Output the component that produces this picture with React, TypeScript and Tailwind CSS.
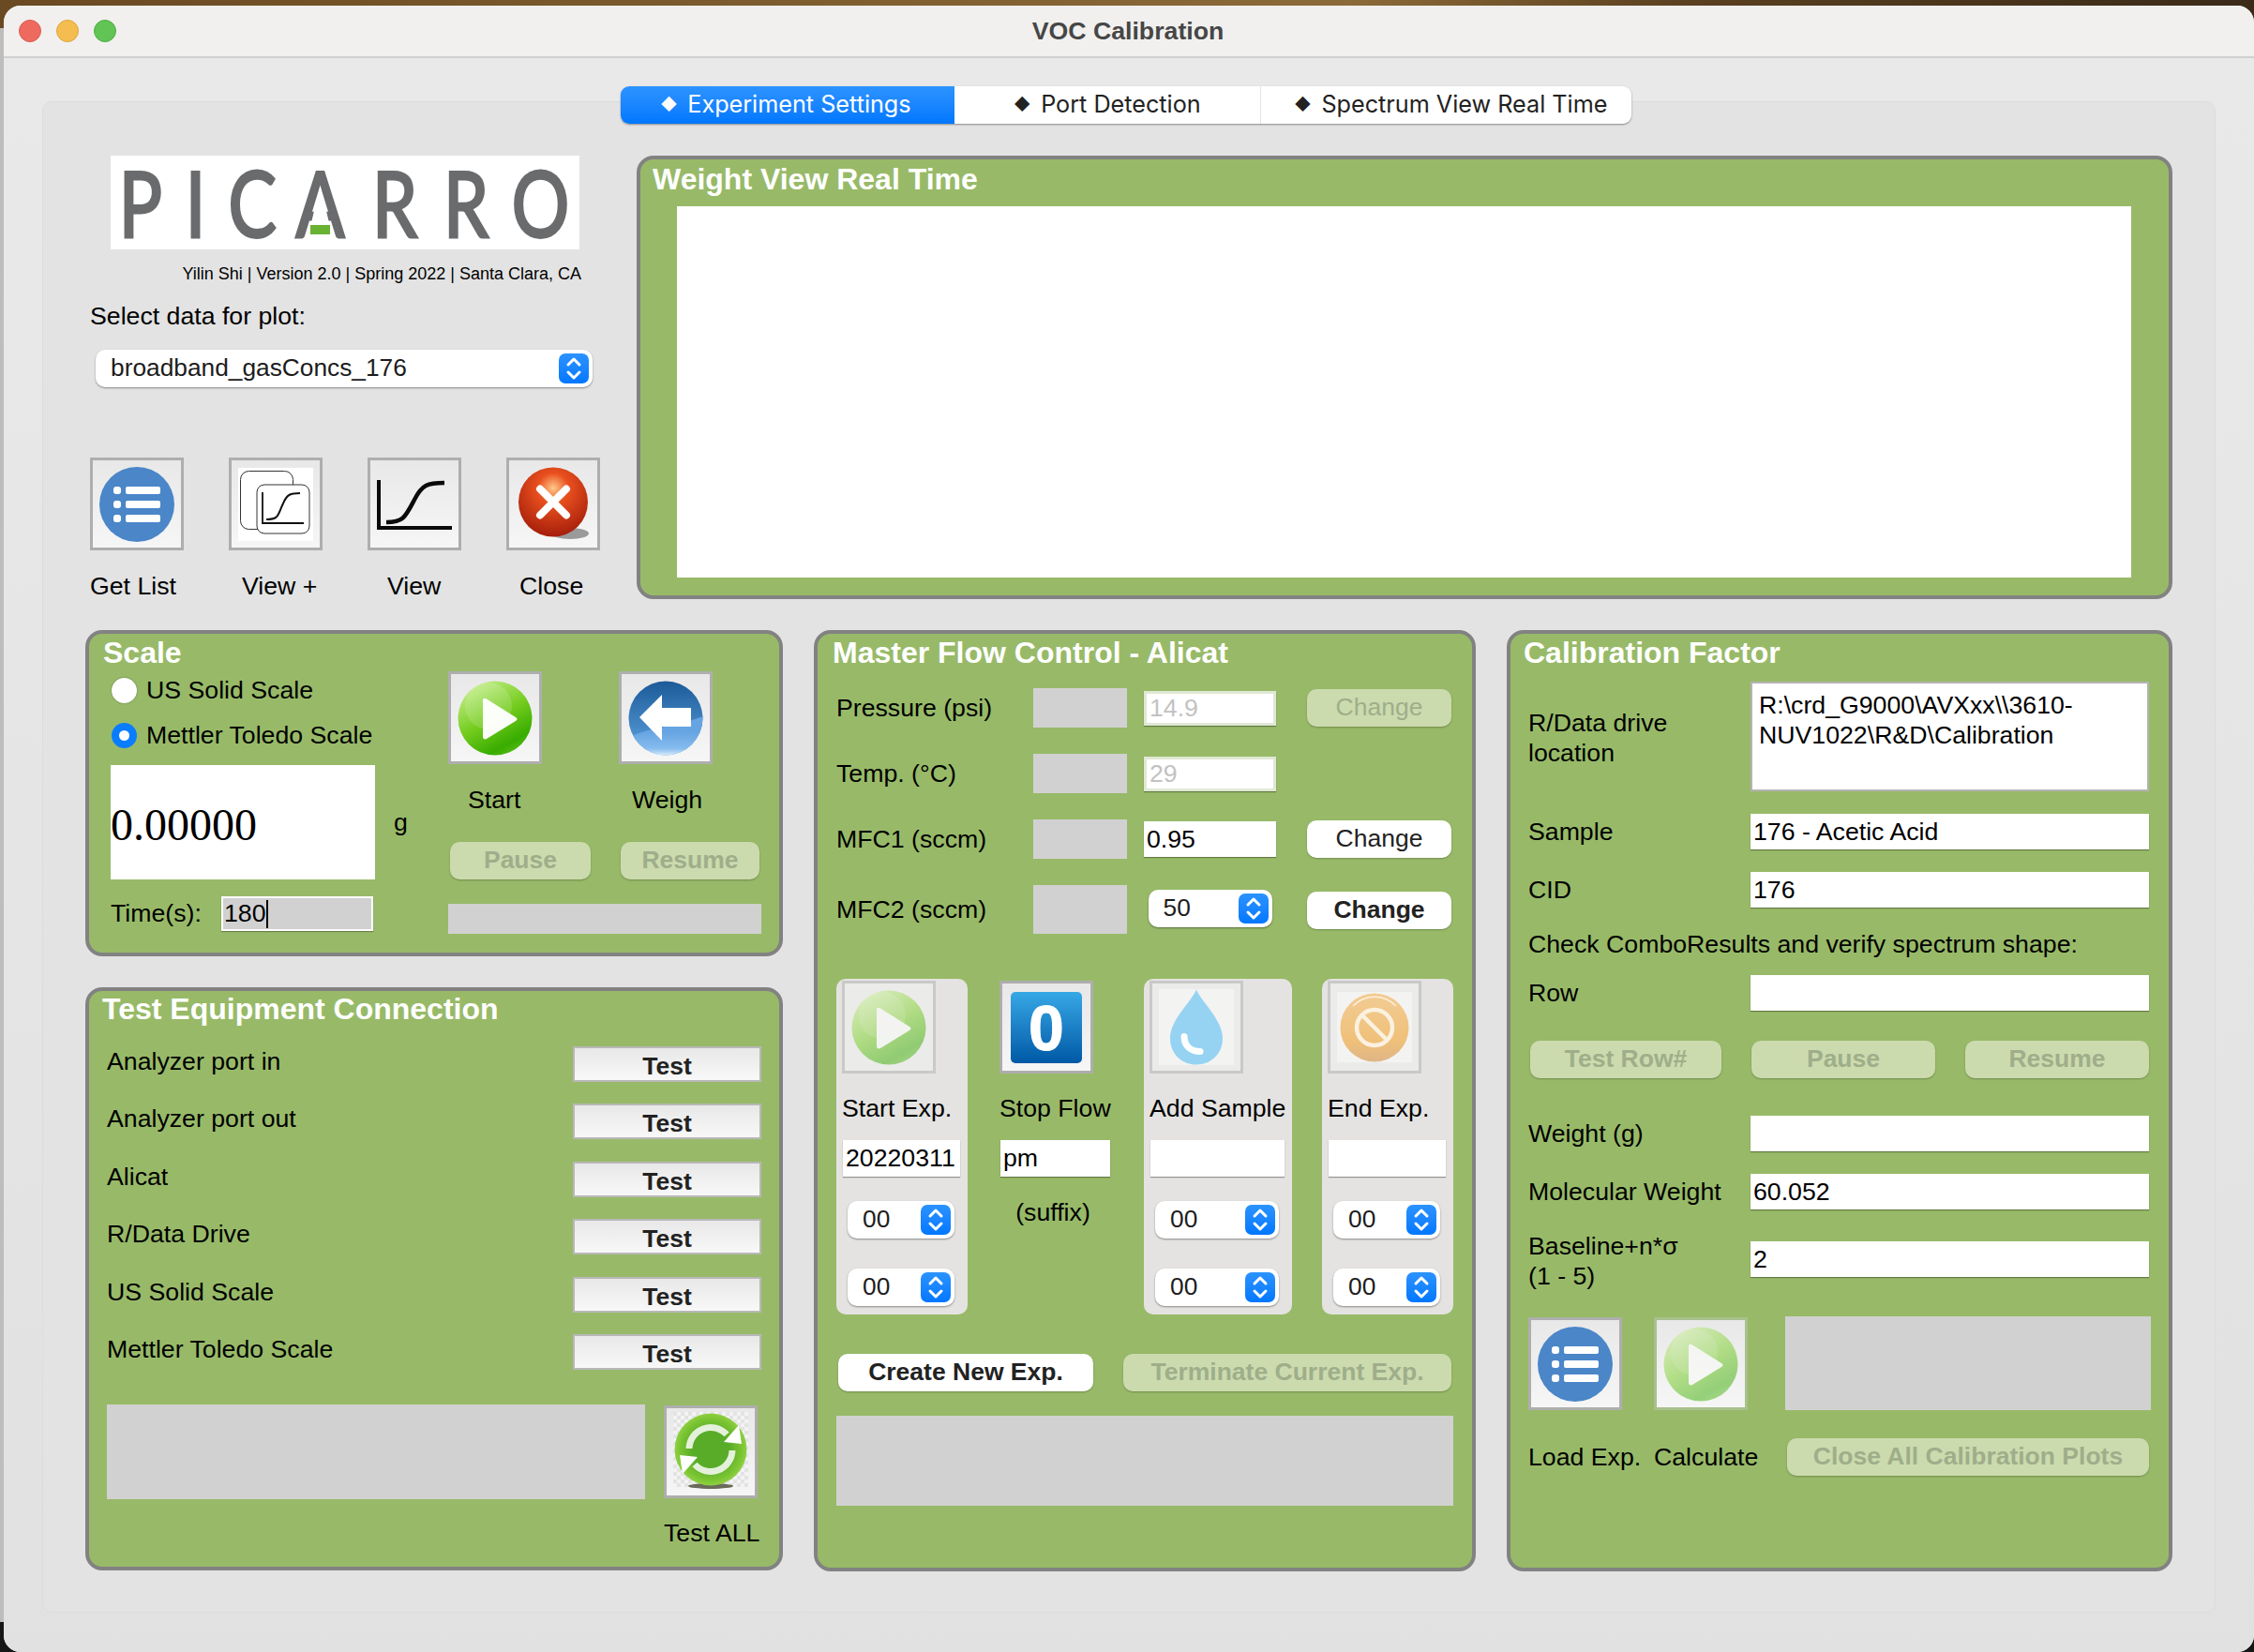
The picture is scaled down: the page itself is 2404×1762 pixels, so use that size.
import React from "react";

const Stepper = () => (
  <div className="w-[32px] h-[32px] rounded-[7px] bg-gradient-to-b from-[#2b93ff] to-[#0077ff] flex items-center justify-center shrink-0">
    <svg width="20" height="28" viewBox="0 0 20 28" fill="none" stroke="#fff" strokeWidth="3" strokeLinecap="round" strokeLinejoin="round">
      <path d="M4 10 L10 4 L16 10" />
      <path d="M4 18 L10 24 L16 18" />
    </svg>
  </div>
);

const Select = ({ value, className }: { value: string; className: string }) => (
  <div className={`h-[40px] rounded-[10px] bg-white shadow-[0_1px_2px_rgba(0,0,0,0.4)] flex items-center justify-between pl-[16px] pr-[4px] text-[26.3px] text-[#1c1c1c] ${className}`}>
    <span>{value}</span>
    <Stepper />
  </div>
);

const Field = ({ value, className, disabled }: { value?: string; className: string; disabled?: boolean }) => (
  <input
    readOnly
    value={value ?? ""}
    className={`block bg-white pl-[3px] outline-none shadow-[0_1px_1px_rgba(0,0,0,0.35)] ${disabled ? "text-[#c2c2c2] border-[3px] border-[#e0e8d4] pl-[1px]" : "text-black"} ${className}`}
  />
);

const Btn = ({ children, className, off, bold }: { children: React.ReactNode; className: string; off?: boolean; bold?: boolean }) => (
  <button
    className={`h-[40px] rounded-[10px] text-[26.5px] flex items-center justify-center shrink-0 shadow-[0_1px_2px_rgba(0,0,0,0.25)] ${off ? "bg-[#cbdbae] text-[#9fae8a]" : "bg-white text-[#222]"} ${bold ? "font-bold" : ""} ${className}`}
  >
    {children}
  </button>
);

const Frame = ({ children, className, faded }: { children: React.ReactNode; className: string; faded?: boolean }) => (
  <div
    className={`w-[100px] h-[99px] border-[3px] flex items-center justify-center shrink-0 ${faded ? "border-[#c9c9c7] bg-[#ebebe9]" : "border-[#aeaeae] bg-gradient-to-b from-[#e8e8e8] to-[#f6f6f6]"} ${className}`}
  >
    {children}
  </div>
);

const Panel = ({ title, className, children }: { title: string; className: string; children: React.ReactNode }) => (
  <div className={`rounded-[18px] border-4 border-[#828282] bg-[#98ba68] shrink-0 ${className}`}>
    <div className="h-[34px] pb-[2px] flex items-center text-[32px] font-bold text-white whitespace-nowrap">{title}</div>
    {children}
  </div>
);

const ListIcon = () => (
  <svg width="82" height="82" viewBox="0 0 82 82">
    <circle cx="41" cy="41" r="40" fill="#4a86c8" />
    <g fill="#fff">
      <rect x="16" y="22" width="8" height="8" rx="3" />
      <rect x="16" y="37" width="8" height="8" rx="3" />
      <rect x="16" y="52" width="8" height="8" rx="3" />
      <rect x="29" y="22" width="37" height="8" rx="2" />
      <rect x="29" y="37" width="37" height="8" rx="2" />
      <rect x="29" y="52" width="37" height="8" rx="2" />
    </g>
  </svg>
);

const ViewPlusIcon = () => (
  <svg width="80" height="78" viewBox="0 0 80 78">
    <rect width="80" height="78" fill="#fff" />
    <rect x="2.5" y="3.5" width="56" height="62" rx="9" fill="#fff" stroke="#333" strokeWidth="1" />
    <rect x="20" y="18" width="56" height="52" rx="8" fill="#fff" stroke="#333" strokeWidth="1" />
    <path d="M26 26 V59 H70" fill="none" stroke="#111" strokeWidth="1.8" />
    <path d="M30 55 C44 55 42 50 48 38 C52 28 56 27 66 27" fill="none" stroke="#111" strokeWidth="2" />
  </svg>
);

const ViewIcon = () => (
  <svg width="84" height="60" viewBox="0 0 84 60">
    <path d="M4 4 V55 H82" fill="none" stroke="#0a0a0a" strokeWidth="4" />
    <path d="M12 49 C30 49 32 44 42 25 C50 9 56 7 74 7" fill="none" stroke="#0a0a0a" strokeWidth="4.5" />
  </svg>
);

const CloseIcon = () => (
  <svg width="84" height="82" viewBox="0 0 84 82">
    <defs>
      <radialGradient id="redBall" cx="50%" cy="30%" r="68%">
        <stop offset="0" stopColor="#ffc98a" />
        <stop offset="0.32" stopColor="#e9501e" />
        <stop offset="1" stopColor="#a8200c" />
      </radialGradient>
    </defs>
    <ellipse cx="60" cy="72" rx="20" ry="6" fill="#9a9a9a" />
    <circle cx="42" cy="38.5" r="37" fill="url(#redBall)" />
    <path d="M28 24.5 L56 52.5 M56 24.5 L28 52.5" stroke="#fff" strokeWidth="8" strokeLinecap="round" />
  </svg>
);

const PlayIcon = () => (
  <svg width="80" height="80" viewBox="0 0 80 80">
    <defs>
      <linearGradient id="greenBall" x1="0.2" y1="0" x2="0.75" y2="1">
        <stop offset="0" stopColor="#c8f08e" />
        <stop offset="0.5" stopColor="#74cc1e" />
        <stop offset="0.85" stopColor="#38ac00" />
        <stop offset="1" stopColor="#58bc18" />
      </linearGradient>
    </defs>
    <circle cx="40" cy="40" r="39.5" fill="url(#greenBall)" />
    <circle cx="33" cy="27" r="25" fill="#fff" opacity="0.14" />
    <path d="M27 21 C27 19 29 18 31 19.5 L62 39 C64 40.5 64 41.5 62 43 L31 62 C29 63 27 62 27 60 Z" fill="#fff" opacity="0.97" />
  </svg>
);

const BackIcon = () => (
  <svg width="80" height="80" viewBox="0 0 80 80">
    <defs>
      <linearGradient id="blueBall" x1="0" y1="0" x2="0" y2="1">
        <stop offset="0" stopColor="#1c5a98" />
        <stop offset="0.7" stopColor="#4a8ecb" />
      </linearGradient>
      <linearGradient id="blueGlow" x1="0" y1="0.4" x2="0" y2="1">
        <stop offset="0" stopColor="#66a4e2" />
        <stop offset="0.7" stopColor="#86bcee" />
        <stop offset="1" stopColor="#dcedfb" />
      </linearGradient>
      <clipPath id="blueClip">
        <circle cx="40" cy="40" r="39.5" />
      </clipPath>
    </defs>
    <circle cx="40" cy="40" r="39.5" fill="url(#blueBall)" />
    <path d="M0 62 C15 50 50 50 80 38 V80 H0 Z" fill="url(#blueGlow)" clipPath="url(#blueClip)" />
    <path d="M12 39 L36 15 V29 H67 V49 H36 V64 Z" fill="#fff" />
  </svg>
);

const RefreshIcon = () => (
  <svg width="80" height="84" viewBox="0 0 80 84">
    <defs>
      <pattern id="checker" width="8" height="8" patternUnits="userSpaceOnUse">
        <rect width="8" height="8" fill="#f3f3f3" />
        <rect width="4" height="4" fill="#e3e3e3" />
        <rect x="4" y="4" width="4" height="4" fill="#e3e3e3" />
      </pattern>
      <radialGradient id="refreshBall" cx="50%" cy="50%" r="50%">
        <stop offset="0.5" stopColor="#58ac28" />
        <stop offset="0.85" stopColor="#7ac432" />
        <stop offset="1" stopColor="#8fd042" />
      </radialGradient>
    </defs>
    <rect width="80" height="80" fill="url(#checker)" />
    <ellipse cx="40" cy="79" rx="24" ry="3" fill="#6a6a5a" />
    <circle cx="40" cy="40" r="38.5" fill="url(#refreshBall)" />
    <path d="M17 39 A23 23 0 0 1 57 24" fill="none" stroke="#e4f1da" strokeWidth="7" />
    <path d="M63 41 A23 23 0 0 1 23 56" fill="none" stroke="#e4f1da" strokeWidth="7" />
    <path d="M70 14 L73 34 L54 32 Z" fill="#fff" />
    <path d="M10 66 L7 46 L26 48 Z" fill="#fff" />
  </svg>
);

const DropIcon = () => (
  <div className="w-[80px] h-[81px] bg-[#f3f3f1] flex items-center justify-center">
    <svg width="60" height="81" viewBox="0 0 60 80">
      <path d="M30 0 C36 14 58 32 58 52 C58 68 46 80 30 80 C14 80 2 68 2 52 C2 32 24 14 30 0 Z" fill="#96d3f2" />
      <path d="M17 50 C17 60 24 66 34 66" fill="none" stroke="#fff" strokeWidth="7" strokeLinecap="round" />
    </svg>
  </div>
);

const EndIcon = () => (
  <div className="w-[80px] h-[75px] bg-[#f3f3f1] flex items-center justify-center">
    <svg width="74" height="74" viewBox="0 0 74 74">
      <defs>
        <linearGradient id="orangeBall" x1="0" y1="0" x2="0" y2="1">
          <stop offset="0" stopColor="#f2cc94" />
          <stop offset="0.7" stopColor="#efc079" />
          <stop offset="1" stopColor="#dfb587" />
        </linearGradient>
      </defs>
      <circle cx="37" cy="37" r="36.5" fill="url(#orangeBall)" />
      <path d="M14 14 A32 32 0 0 1 60 14" fill="none" stroke="#fff" strokeWidth="1.5" opacity="0.7" />
      <circle cx="37" cy="37" r="19" fill="none" stroke="#fbf1e0" strokeWidth="4.5" />
      <path d="M24 24 L50 50" stroke="#fbf1e0" strokeWidth="4.5" />
    </svg>
  </div>
);

const StopIcon = () => (
  <div className="w-[76px] h-[76px] rounded-[5px] bg-gradient-to-b from-[#37a8e6] to-[#0059a6] flex items-center justify-center text-[68px] leading-none font-bold text-white [-webkit-text-stroke:1px_#fff]">
    0
  </div>
);

const LogoLetter = ({ ch, className }: { ch: string; className: string }) => (
  <span className={`w-0 flex justify-center ${className}`}>
    <span className="inline-block scale-x-[0.8]">{ch}</span>
  </span>
);

const Tab = ({ label, className }: { label: string; className: string }) => (
  <div className={`flex items-center justify-center gap-[11px] ${className}`}>
    <span className="text-[17px]">◆</span>
    {label}
  </div>
);

const testRows = ["Analyzer port in", "Analyzer port out", "Alicat", "R/Data Drive", "US Solid Scale", "Mettler Toledo Scale"];

const TimeCol = ({ wrap, icon, label, inputW, selW }: { wrap: string; icon: React.ReactNode; label: string; inputW: string; selW: string }) => (
  <div className={`h-[358px] rounded-[10px] bg-[#e4e3e1] pt-[2px] shrink-0 ${wrap}`}>
    <Frame faded className="ml-[6px]">{icon}</Frame>
    <div className="mt-[22px] ml-[6px] h-[30px] flex items-center whitespace-nowrap">{label}</div>
    <Field className={`mt-[19px] ml-[7px] h-[39px] ${inputW}`} value={label === "Start Exp." ? "20220311" : ""} />
    <Select value="00" className={`mt-[26px] ml-[12px] ${selW}`} />
    <Select value="00" className={`mt-[32px] ml-[12px] ${selW}`} />
  </div>
);

function PlayFaded() {
  return (
    <div className="opacity-50">
      <PlayIcon />
    </div>
  );
}

const App = () => (
  <div className="w-[2404px] h-[1762px] overflow-hidden flex pl-[4px] pt-[6px] text-[26.7px] text-black [font-family:'Liberation_Sans',Arial,sans-serif] [background:linear-gradient(90deg,#6a4a22,#8c6a38_60%,#5a4020_75%,#3a2a18)_top/100%_30px_no-repeat,linear-gradient(180deg,#bdbdbd_0,#bdbdbd_1730px,#161616_1730px)]">
    <div className="w-[2400px] h-[1756px] rounded-[18px] overflow-hidden flex flex-col bg-[#e8e8e8]">
      {/* title bar */}
      <div className="h-[56px] shrink-0 bg-[#f1f0ee] border-b-2 border-[#d0d0ce] flex items-center">
        <div className="flex gap-[16px] pl-[16px]">
          <span className="w-[24px] h-[24px] rounded-full bg-[#ee6a5f] border border-[#d95a50]" />
          <span className="w-[24px] h-[24px] rounded-full bg-[#f5bd4f] border border-[#dba53f]" />
          <span className="w-[24px] h-[24px] rounded-full bg-[#61c454] border border-[#52ad46]" />
        </div>
        <div className="flex-1 text-center font-bold text-[#464646] pr-[122px]">VOC Calibration</div>
      </div>

      <div className="flex-1 flex flex-col bg-gradient-to-b from-[#e9e9e9] to-[#e1e1e1]">
        {/* tabs */}
        <div className="relative z-10 ml-[658px] mt-[30px] -mb-[24px] h-[40px] w-[1078px] rounded-[9px] bg-white shadow-[0_1px_2px_rgba(0,0,0,0.4)] flex overflow-hidden text-[25.2px] text-[#222] [font-family:Inter,sans-serif]">
          <Tab label="Experiment Settings" className="w-[356px] pr-[4px] bg-gradient-to-b from-[#2c93ff] to-[#0077ff] text-white" />
          <Tab label="Port Detection" className="w-[327px] border-r border-[#e4e4e4]" />
          <Tab label="Spectrum View Real Time" className="flex-1 pl-[10px]" />
        </div>

        <div className="ml-[41px] w-[2318px] h-[1612px] rounded-[10px] border border-[#dcdcdc] bg-[#e3e3e3] pl-[45px] pt-[57px]">
          {/* top row */}
          <div className="flex h-[472px]">
            <div className="w-[588px] shrink-0">
              <div className="relative ml-[27px] w-[500px] h-[100px] bg-white flex items-center text-[#6a6b6d] text-[96px] leading-none [font-family:Lato,sans-serif] [-webkit-text-stroke:3px_#6a6b6d]">
                <LogoLetter ch="P" className="ml-[32px]" />
                <LogoLetter ch="I" className="ml-[58px]" />
                <LogoLetter ch="C" className="ml-[61px]" />
                <LogoLetter ch="A" className="ml-[72px]" />
                <LogoLetter ch="R" className="ml-[80px]" />
                <LogoLetter ch="R" className="ml-[76px]" />
                <LogoLetter ch="O" className="ml-[79px]" />
                <svg className="absolute left-0 top-0" width="500" height="100" viewBox="0 0 500 100">
                  <path d="M223.5 32 L236 84 H211 Z" fill="#fff" />
                  <rect x="213" y="74" width="21" height="10" fill="#69b234" />
                </svg>
              </div>
              <div className="mt-[16px] w-[529px] h-[20px] flex items-center justify-end text-[18px] whitespace-nowrap">Yilin Shi | Version 2.0 | Spring 2022 | Santa Clara, CA</div>
              <div className="mt-[20px] ml-[5px] h-[30px] flex items-center">Select data for plot:</div>
              <Select value="broadband_gasConcs_176" className="mt-[21px] ml-[11px] w-[530px]" />
              <div className="mt-[75px] ml-[5px] flex gap-[48px]">
                <Frame className=""><ListIcon /></Frame>
                <Frame className=""><ViewPlusIcon /></Frame>
                <Frame className=""><ViewIcon /></Frame>
                <Frame className=""><CloseIcon /></Frame>
              </div>
              <div className="mt-[23px] ml-[5px] flex h-[30px] items-center">
                <span className="w-[148px]">Get List</span>
                <span className="w-[148px] pl-[14px]">View +</span>
                <span className="w-[148px] pl-[21px]">View</span>
                <span className="pl-[14px]">Close</span>
              </div>
            </div>

            <div className="w-[1638px] h-[473px] rounded-[18px] border-4 border-[#828282] bg-[#98ba68] pt-[4px]">
              <div className="h-[34px] pl-[13px] flex items-center text-[32px] font-bold text-white">Weight View Real Time</div>
              <div className="mt-[12px] ml-[39px] w-[1551px] h-[396px] bg-white" />
            </div>
          </div>

          {/* bottom row */}
          <div className="mt-[34px] flex gap-[33px]">
            <div className="w-[744px] shrink-0">
              <Panel title="Scale" className="h-[348px] pt-[4px] pl-[15px]">
                <div className="flex -ml-[15px]">
                  <div className="ml-[23px] w-[360px] shrink-0 pt-[6px]">
                    <div className="h-[32px] flex items-center gap-[10px] pl-[1px]">
                      <span className="w-[27px] h-[27px] rounded-full bg-white shadow-[0_0_2px_rgba(0,0,0,0.4)]" />
                      US Solid Scale
                    </div>
                    <div className="mt-[16px] h-[32px] flex items-center gap-[10px] pl-[1px]">
                      <span className="w-[27px] h-[27px] rounded-full bg-[#0a7dff] flex items-center justify-center">
                        <span className="w-[11px] h-[11px] rounded-full bg-white" />
                      </span>
                      Mettler Toledo Scale
                    </div>
                    <div className="mt-[16px] flex items-center h-[122px]">
                      <div className="w-[282px] h-[122px] bg-white flex items-center pt-[5px] text-[48px] [font-family:'Liberation_Serif',serif]">0.00000</div>
                      <span className="ml-[20px]">g</span>
                    </div>
                    <div className="mt-[18px] h-[37px] flex items-center">
                      <span className="w-[118px]">Time(s):</span>
                      <div className="w-[162px] h-[37px] bg-[#d1d1d1] border-2 border-white shadow-[0_1px_1px_rgba(0,0,0,0.3)] flex items-center pl-[1px]">
                        180<span className="w-[2px] h-[30px] bg-black" />
                      </div>
                    </div>
                  </div>
                  <div className="w-[334px] shrink-0 pt-[2px]">
                    <div className="grid grid-cols-[182px_1fr]">
                      <Frame className=""><PlayIcon /></Frame>
                      <Frame className=""><BackIcon /></Frame>
                    </div>
                    <div className="mt-[23px] h-[30px] leading-[30px] grid grid-cols-[182px_1fr]">
                      <span className="pl-[21px]">Start</span>
                      <span className="pl-[14px]">Weigh</span>
                    </div>
                    <div className="mt-[30px] ml-[2px] flex gap-[32px]">
                      <Btn off bold className="w-[150px]">Pause</Btn>
                      <Btn off bold className="w-[148px]">Resume</Btn>
                    </div>
                    <div className="mt-[26px] h-[32px] bg-[#d1d1d1]" />
                  </div>
                </div>
              </Panel>

              <Panel title="Test Equipment Connection" className="mt-[33px] h-[622px] pt-[3px] pl-[14px]">
                <div className="-ml-[14px]">
                  <div className="mt-[22px] ml-[19px] w-[698px] flex flex-col gap-[23.4px]">
                    {testRows.map((row) => (
                      <div key={row} className="h-[38px] flex items-center justify-between">
                        <span className="pb-[6px]">{row}</span>
                        <button className="w-[201px] h-[38px] border-2 border-[#b8b8b8] bg-gradient-to-b from-[#e8e8e8] to-[#f8f8f8] font-bold text-[#222] text-[26.5px]">Test</button>
                      </div>
                    ))}
                  </div>
                  <div className="mt-[37px] ml-[19px] flex items-start gap-[20px]">
                    <div className="w-[574px] h-[101px] bg-[#d1d1d1]" />
                    <Frame className="mt-[1px]"><RefreshIcon /></Frame>
                  </div>
                  <div className="mt-[21px] ml-[613px] h-[30px] flex items-center">Test ALL</div>
                </div>
              </Panel>
            </div>

            <Panel title="Master Flow Control - Alicat" className="w-[706px] h-[1004px] pt-[4px] pl-[16px]">
              <div className="-ml-[16px]">
                <div className="mt-[20px] ml-[20px] flex flex-col gap-[28px]">
                  <div className="h-[42px] flex items-center">
                    <span className="w-[210px] shrink-0">Pressure (psi)</span>
                    <div className="w-[100px] h-[42px] bg-[#d1d1d1]" />
                    <Field disabled value="14.9" className="ml-[18px] w-[141px] h-[37px]" />
                    <Btn off className="ml-[33px] w-[154px]">Change</Btn>
                  </div>
                  <div className="h-[42px] flex items-center">
                    <span className="w-[210px] shrink-0">Temp. (°C)</span>
                    <div className="w-[100px] h-[42px] bg-[#d1d1d1]" />
                    <Field disabled value="29" className="ml-[18px] w-[141px] h-[37px]" />
                  </div>
                  <div className="h-[42px] flex items-center">
                    <span className="w-[210px] shrink-0">MFC1 (sccm)</span>
                    <div className="w-[100px] h-[42px] bg-[#d1d1d1]" />
                    <Field value="0.95" className="ml-[18px] w-[141px] h-[38px]" />
                    <Btn className="ml-[33px] w-[154px]">Change</Btn>
                  </div>
                  <div className="h-[52px] flex items-center">
                    <span className="w-[210px] shrink-0">MFC2 (sccm)</span>
                    <div className="w-[100px] h-[52px] bg-[#d1d1d1]" />
                    <div className="ml-[18px] w-[141px] flex justify-center">
                      <Select value="50" className="w-[132px] -mt-[2px]" />
                    </div>
                    <Btn bold className="ml-[33px] w-[154px] mt-[2px]">Change</Btn>
                  </div>
                </div>

                <div className="mt-[48px] ml-[20px] flex">
                  <TimeCol wrap="w-[140px]" icon={<PlayFaded />} label="Start Exp." inputW="w-[125px]" selW="w-[114px]" />
                  <div className="ml-[34px] w-[118px] shrink-0 pt-[2px]">
                    <Frame className=""><StopIcon /></Frame>
                    <div className="mt-[22px] h-[30px] flex items-center whitespace-nowrap">Stop Flow</div>
                    <Field value="pm" className="mt-[19px] ml-[1px] w-[117px] h-[39px]" />
                    <div className="mt-[23px] h-[30px] flex items-center justify-center pr-[4px]">(suffix)</div>
                  </div>
                  <TimeCol wrap="ml-[36px] w-[158px]" icon={<DropIcon />} label="Add Sample" inputW="w-[143px]" selW="w-[132px]" />
                  <TimeCol wrap="ml-[32px] w-[140px]" icon={<EndIcon />} label="End Exp." inputW="w-[125px]" selW="w-[114px]" />
                </div>

                <div className="mt-[42px] ml-[22px] flex gap-[32px]">
                  <Btn bold className="w-[272px]">Create New Exp.</Btn>
                  <Btn off bold className="w-[350px]">Terminate Current Exp.</Btn>
                </div>
                <div className="mt-[26px] ml-[20px] w-[658px] h-[96px] bg-[#d1d1d1]" />
              </div>
            </Panel>

            <Panel title="Calibration Factor" className="w-[710px] h-[1004px] pt-[4px] pl-[14px]">
              <div className="-ml-[14px] pl-[19px]">
                <div className="mt-[13px] flex">
                  <div className="w-[237px] shrink-0 pt-[28px] leading-[32px]">R/Data drive<br />location</div>
                  <div className="w-[425px] h-[117px] bg-white border-2 border-[#b4b4b4] pl-[7px] pt-[7px] leading-[32px]">R:\crd_G9000\AVXxx\\3610-<br />NUV1022\R&amp;D\Calibration</div>
                </div>
                <div className="mt-[24px] h-[38px] flex items-center">
                  <span className="w-[237px] shrink-0">Sample</span>
                  <Field value="176 - Acetic Acid" className="w-[425px] h-[38px]" />
                </div>
                <div className="mt-[24px] h-[38px] flex items-center">
                  <span className="w-[237px] shrink-0">CID</span>
                  <Field value="176" className="w-[425px] h-[38px]" />
                </div>
                <div className="mt-[24px] h-[30px] flex items-center">Check ComboResults and verify spectrum shape:</div>
                <div className="mt-[18px] h-[38px] flex items-center">
                  <span className="w-[237px] shrink-0">Row</span>
                  <Field className="w-[425px] h-[38px]" />
                </div>
                <div className="mt-[32px] ml-[2px] flex gap-[32px]">
                  <Btn off bold className="w-[204px]">Test Row#</Btn>
                  <Btn off bold className="w-[196px]">Pause</Btn>
                  <Btn off bold className="w-[196px]">Resume</Btn>
                </div>
                <div className="mt-[40px] h-[38px] flex items-center">
                  <span className="w-[237px] shrink-0">Weight (g)</span>
                  <Field className="w-[425px] h-[38px]" />
                </div>
                <div className="mt-[24px] h-[38px] flex items-center">
                  <span className="w-[237px] shrink-0">Molecular Weight</span>
                  <Field value="60.052" className="w-[425px] h-[38px]" />
                </div>
                <div className="mt-[34px] h-[38px] flex items-center">
                  <span className="w-[237px] shrink-0 leading-[32px] mt-[4px]">Baseline+n*σ<br />(1 - 5)</span>
                  <Field value="2" className="w-[425px] h-[38px]" />
                </div>
                <div className="mt-[42px] flex items-start">
                  <Frame className="mt-[1px]"><ListIcon /></Frame>
                  <Frame className="ml-[34px] mt-[1px] !border-[#a9c08c] !bg-[#c6d8a8]"><PlayFaded /></Frame>
                  <div className="ml-[40px] w-[390px] h-[100px] bg-[#d1d1d1]" />
                </div>
                <div className="mt-[30px] flex items-center">
                  <span className="w-[134px]">Load Exp.</span>
                  <span className="w-[142px]">Calculate</span>
                  <Btn off bold className="w-[386px]">Close All Calibration Plots</Btn>
                </div>
              </div>
            </Panel>
          </div>
        </div>
      </div>
    </div>
  </div>
);

export default App;
